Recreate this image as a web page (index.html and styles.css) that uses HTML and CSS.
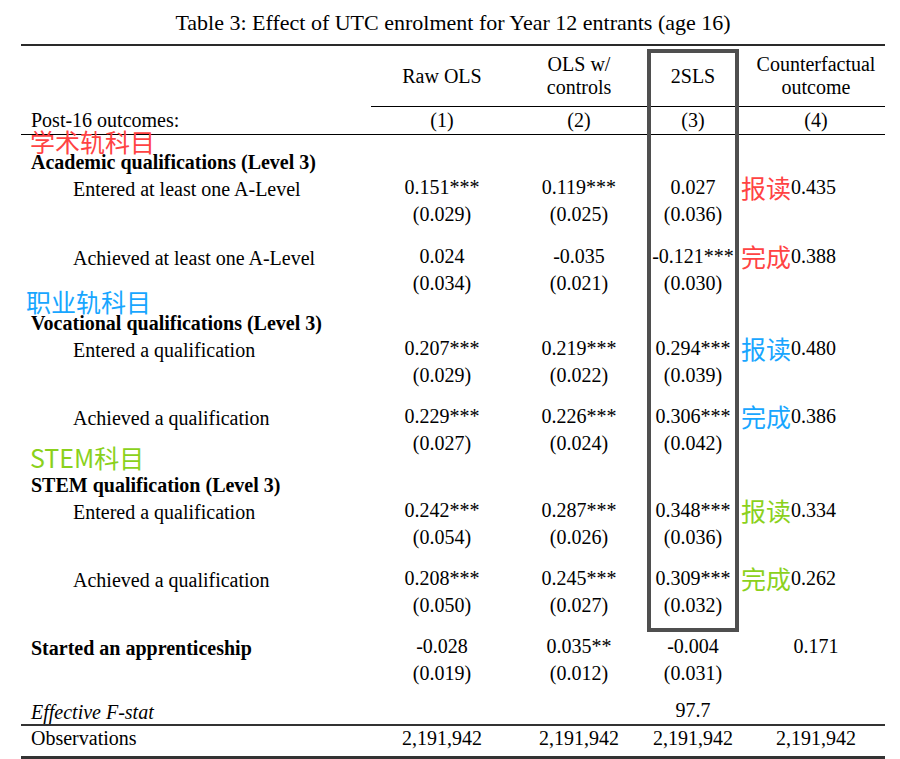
FILE: index.html
```html
<!DOCTYPE html>
<html lang="en">
<head>
<meta charset="utf-8">
<title>Table 3</title>
<link rel="stylesheet" href="styles.css">
</head>
<body>
<div class="sheet">
  <h1 class="title">Table 3: Effect of UTC enrolment for Year 12 entrants (age 16)</h1>
  <div class="table">
    <div class="row head">
      <div class="lab"></div>
      <div class="hc">Raw OLS</div>
      <div class="hc">OLS w/<br>controls</div>
      <div class="hc">2SLS</div>
      <div class="hc c4">Counterfactual<br>outcome</div>
    </div>
    <div class="row nums">
      <div class="lab">Post-16 outcomes:</div>
      <div class="c">(1)</div>
      <div class="c">(2)</div>
      <div class="c">(3)</div>
      <div class="c c4">(4)</div>
    </div>

    <div class="row sect sect-aca"><div class="lab b">Academic qualifications (Level 3)</div></div>
    <div class="row pair">
      <div class="lab ind">Entered at least one A-Level</div>
      <div class="c"><div class="v">0.151***</div><div class="se">(0.029)</div></div>
      <div class="c"><div class="v">0.119***</div><div class="se">(0.025)</div></div>
      <div class="c"><div class="v">0.027</div><div class="se">(0.036)</div></div>
      <div class="c c4 note"><div class="v"><span class="zh red">报读</span>0.435</div></div>
    </div>
    <div class="row pair g15">
      <div class="lab ind">Achieved at least one A-Level</div>
      <div class="c"><div class="v">0.024</div><div class="se">(0.034)</div></div>
      <div class="c"><div class="v">-0.035</div><div class="se">(0.021)</div></div>
      <div class="c"><div class="v">-0.121***</div><div class="se">(0.030)</div></div>
      <div class="c c4 note"><div class="v"><span class="zh red">完成</span>0.388</div></div>
    </div>

    <div class="row sect sect-voc"><div class="lab b">Vocational qualifications (Level 3)</div></div>
    <div class="row pair">
      <div class="lab ind">Entered a qualification</div>
      <div class="c"><div class="v">0.207***</div><div class="se">(0.029)</div></div>
      <div class="c"><div class="v">0.219***</div><div class="se">(0.022)</div></div>
      <div class="c"><div class="v">0.294***</div><div class="se">(0.039)</div></div>
      <div class="c c4 note"><div class="v"><span class="zh blue">报读</span>0.480</div></div>
    </div>
    <div class="row pair g14">
      <div class="lab ind">Achieved a qualification</div>
      <div class="c"><div class="v">0.229***</div><div class="se">(0.027)</div></div>
      <div class="c"><div class="v">0.226***</div><div class="se">(0.024)</div></div>
      <div class="c"><div class="v">0.306***</div><div class="se">(0.042)</div></div>
      <div class="c c4 note"><div class="v"><span class="zh blue">完成</span>0.386</div></div>
    </div>

    <div class="row sect sect-stem"><div class="lab b">STEM qualification (Level 3)</div></div>
    <div class="row pair">
      <div class="lab ind">Entered a qualification</div>
      <div class="c"><div class="v">0.242***</div><div class="se">(0.054)</div></div>
      <div class="c"><div class="v">0.287***</div><div class="se">(0.026)</div></div>
      <div class="c"><div class="v">0.348***</div><div class="se">(0.036)</div></div>
      <div class="c c4 note"><div class="v"><span class="zh green">报读</span>0.334</div></div>
    </div>
    <div class="row pair g14">
      <div class="lab ind">Achieved a qualification</div>
      <div class="c"><div class="v">0.208***</div><div class="se">(0.050)</div></div>
      <div class="c"><div class="v">0.245***</div><div class="se">(0.027)</div></div>
      <div class="c"><div class="v">0.309***</div><div class="se">(0.032)</div></div>
      <div class="c c4 note"><div class="v"><span class="zh green">完成</span>0.262</div></div>
    </div>

    <div class="row pair g14">
      <div class="lab b">Started an apprenticeship</div>
      <div class="c"><div class="v">-0.028</div><div class="se">(0.019)</div></div>
      <div class="c"><div class="v">0.035**</div><div class="se">(0.012)</div></div>
      <div class="c"><div class="v">-0.004</div><div class="se">(0.031)</div></div>
      <div class="c c4"><div class="v">0.171</div></div>
    </div>

    <div class="row fstat">
      <div class="lab i">Effective F-stat</div>
      <div class="c"></div>
      <div class="c"></div>
      <div class="c fv">97.7</div>
      <div class="c c4"></div>
    </div>
    <div class="row obs">
      <div class="lab">Observations</div>
      <div class="c">2,191,942</div>
      <div class="c">2,191,942</div>
      <div class="c">2,191,942</div>
      <div class="c c4">2,191,942</div>
    </div>
  </div>

  <div class="box"></div>
  <span class="tag red tag-aca">学术轨科目</span>
  <span class="tag blue tag-voc">职业轨科目</span>
  <span class="tag green tag-stem">STEM科目</span>
</div>
</body>
</html>
```

FILE: styles.css
```css
html, body {
  margin: 0;
  padding: 0;
  background: #ffffff;
}

body {
  font-family: "Liberation Serif", "Times New Roman", serif;
  font-size: 20px;
  color: #000000;
}

.sheet {
  position: relative;
  width: 900px;
  height: 759px;
  overflow: hidden;
}

.title {
  margin: 0 0 0 21px;
  padding-top: 9px;
  font-size: 22px;
  font-weight: normal;
  line-height: 27px;
  height: 27px;
  text-align: center;
  width: 864px;
  white-space: nowrap;
}

.table {
  margin: 8px 0 0 21px;
  width: 864px;
  border-top: 2px solid #2a2a2a;
}

.row {
  display: grid;
  grid-template-columns: 350px 142px 132px 96px 144px;
  line-height: 27px;
}

.lab {
  padding-left: 10px;
  white-space: nowrap;
}

.lab.ind {
  padding-left: 52px;
}

.b { font-weight: bold; }
.i { font-style: italic; }

.c {
  text-align: center;
  white-space: nowrap;
}

.c4 {
  padding-left: 6px;
}

.c4.note {
  padding-left: 0;
  text-align: left;
}

/* header */
.head .hc {
  height: 60px;
  display: flex;
  align-items: center;
  justify-content: center;
  text-align: center;
  line-height: 23px;
  border-bottom: 1px solid #000;
}

.head .hc.c4 {
  padding-left: 6px;
}

.nums {
  height: 27px;
  border-bottom: 1px solid #000;
}

/* sections */
.sect { height: 27px; }
.sect-aca { margin-top: 14px; }
.sect-voc { margin-top: 11px; }
.sect-stem { margin-top: 13px; }

.pair { height: 54px; }
.g15 { margin-top: 15px; }
.g14 { margin-top: 14px; }

.pair .v { line-height: 23px; }
.pair .se { line-height: 31px; }

.fstat {
  margin-top: 11px;
  height: 24px;
  line-height: 24px;
  border-bottom: 2px solid #333;
}

.fstat .fv { line-height: 20px; }

.obs {
  height: 30px;
  line-height: 25px;
  border-bottom: 3px solid #333;
}

/* annotations */
.zh {
  font-family: "Noto Sans CJK SC", "Microsoft YaHei", sans-serif;
  font-size: 25px;
  line-height: 0;
  vertical-align: -4px;
}

.red { color: #ff4343; }
.blue { color: #18a6ff; }
.green { color: #8bd11c; }

.tag {
  position: absolute;
  font-family: "Noto Sans CJK SC", "Microsoft YaHei", sans-serif;
  font-size: 25px;
  line-height: 25px;
  white-space: nowrap;
}

.tag-aca { left: 30px; top: 129px; }
.tag-voc { left: 26px; top: 289px; }
.tag-stem { left: 30px; top: 445px; }

/* highlighted 2SLS column */
.box {
  position: absolute;
  left: 647px;
  top: 49px;
  width: 92px;
  height: 583px;
  box-sizing: border-box;
  border: 4px solid #4f4f4f;
  pointer-events: none;
}
```
